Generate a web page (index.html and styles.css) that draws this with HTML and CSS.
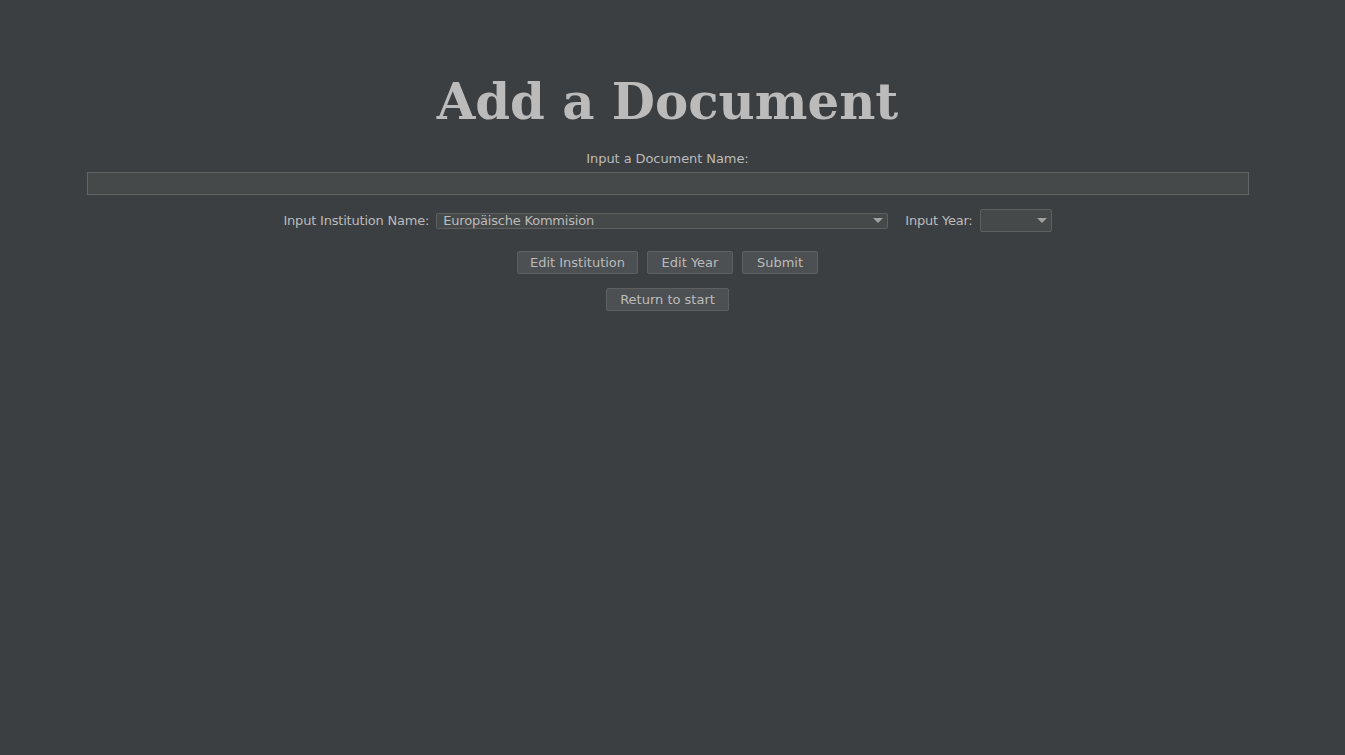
FILE: index.html
```html
<!DOCTYPE html>
<html lang="en">
<head>
<meta charset="utf-8">
<title>Add a Document</title>
<link rel="stylesheet" href="styles.css">
</head>
<body>
<main class="page">
  <h1 class="title">Add a Document</h1>
  <label class="label name-label" for="docname">Input a Document Name:</label>
  <input class="textfield" id="docname" type="text">
  <div class="row">
    <span class="label">Input Institution Name:</span>
    <div class="combo combo-inst">
      <span class="combo-text">Europäische Kommision</span>
      <span class="arrow"></span>
    </div>
    <span class="label year-label">Input Year:</span>
    <div class="combo combo-year">
      <span class="combo-text"></span>
      <span class="arrow"></span>
    </div>
  </div>
  <div class="buttons">
    <button class="btn btn-inst">Edit Institution</button>
    <button class="btn btn-year">Edit Year</button>
    <button class="btn btn-submit">Submit</button>
  </div>
  <div class="buttons return-row">
    <button class="btn btn-return">Return to start</button>
  </div>
</main>
</body>
</html>
```
FILE: styles.css
```css
html, body {
  margin: 0;
  padding: 0;
  background: #3c3f41;
  height: 100%;
}
body {
  font-family: "DejaVu Sans", "Liberation Sans", sans-serif;
  font-size: 13px;
  letter-spacing: -0.2px;
  color: #bbbbbb;
}
.page {
  width: 1335px;
  display: flex;
  flex-direction: column;
  align-items: center;
  padding-top: 77px;
}
.title {
  margin: 0;
  font-family: "DejaVu Serif", "Liberation Serif", serif;
  font-weight: bold;
  font-size: 49.8px;
  letter-spacing: 0;
  line-height: 50px;
  color: #bbbbbb;
}
.label {
  font-size: 13px;
  line-height: 16px;
  color: #bbbbbb;
  white-space: nowrap;
}
.name-label {
  margin-top: 24px;
  letter-spacing: -0.08px;
}
.textfield {
  box-sizing: border-box;
  width: 1162px;
  height: 23px;
  margin: 5px 0 0 0;
  padding: 0 4px;
  border: 1px solid #646464;
  background: #45494a;
  color: #bbbbbb;
  font: inherit;
  outline: none;
}
.row {
  display: flex;
  align-items: center;
  height: 23px;
  margin-top: 14px;
}
.combo {
  box-sizing: border-box;
  display: flex;
  align-items: center;
  border: 1px solid #5e6060;
  background: #45494a;
  border-radius: 2px;
}
.combo-inst {
  width: 452px;
  height: 16px;
  margin-left: 7px;
  padding-left: 6px;
}
.combo-year {
  width: 72px;
  height: 23px;
  margin-left: 7px;
}
.combo-text {
  flex: 1;
  line-height: 14px;
  color: #bbbbbb;
  white-space: nowrap;
}
.arrow {
  width: 0;
  height: 0;
  border-left: 5px solid transparent;
  border-right: 5px solid transparent;
  border-top: 5px solid #a0a0a0;
  margin-right: 4px;
}
.year-label {
  margin-left: 17px;
}
.buttons {
  display: flex;
  gap: 9px;
  margin-top: 19px;
}
.return-row {
  margin-top: 14px;
}
.btn {
  box-sizing: border-box;
  height: 23px;
  padding: 0;
  border: 1px solid #5e6060;
  border-radius: 2px;
  background: #4c5052;
  color: #bbbbbb;
  font: inherit;
  font-size: 13px;
}
.btn-inst { width: 121px; }
.btn-year { width: 86px; }
.btn-submit { width: 76px; }
.btn-return { width: 123px; }
```
